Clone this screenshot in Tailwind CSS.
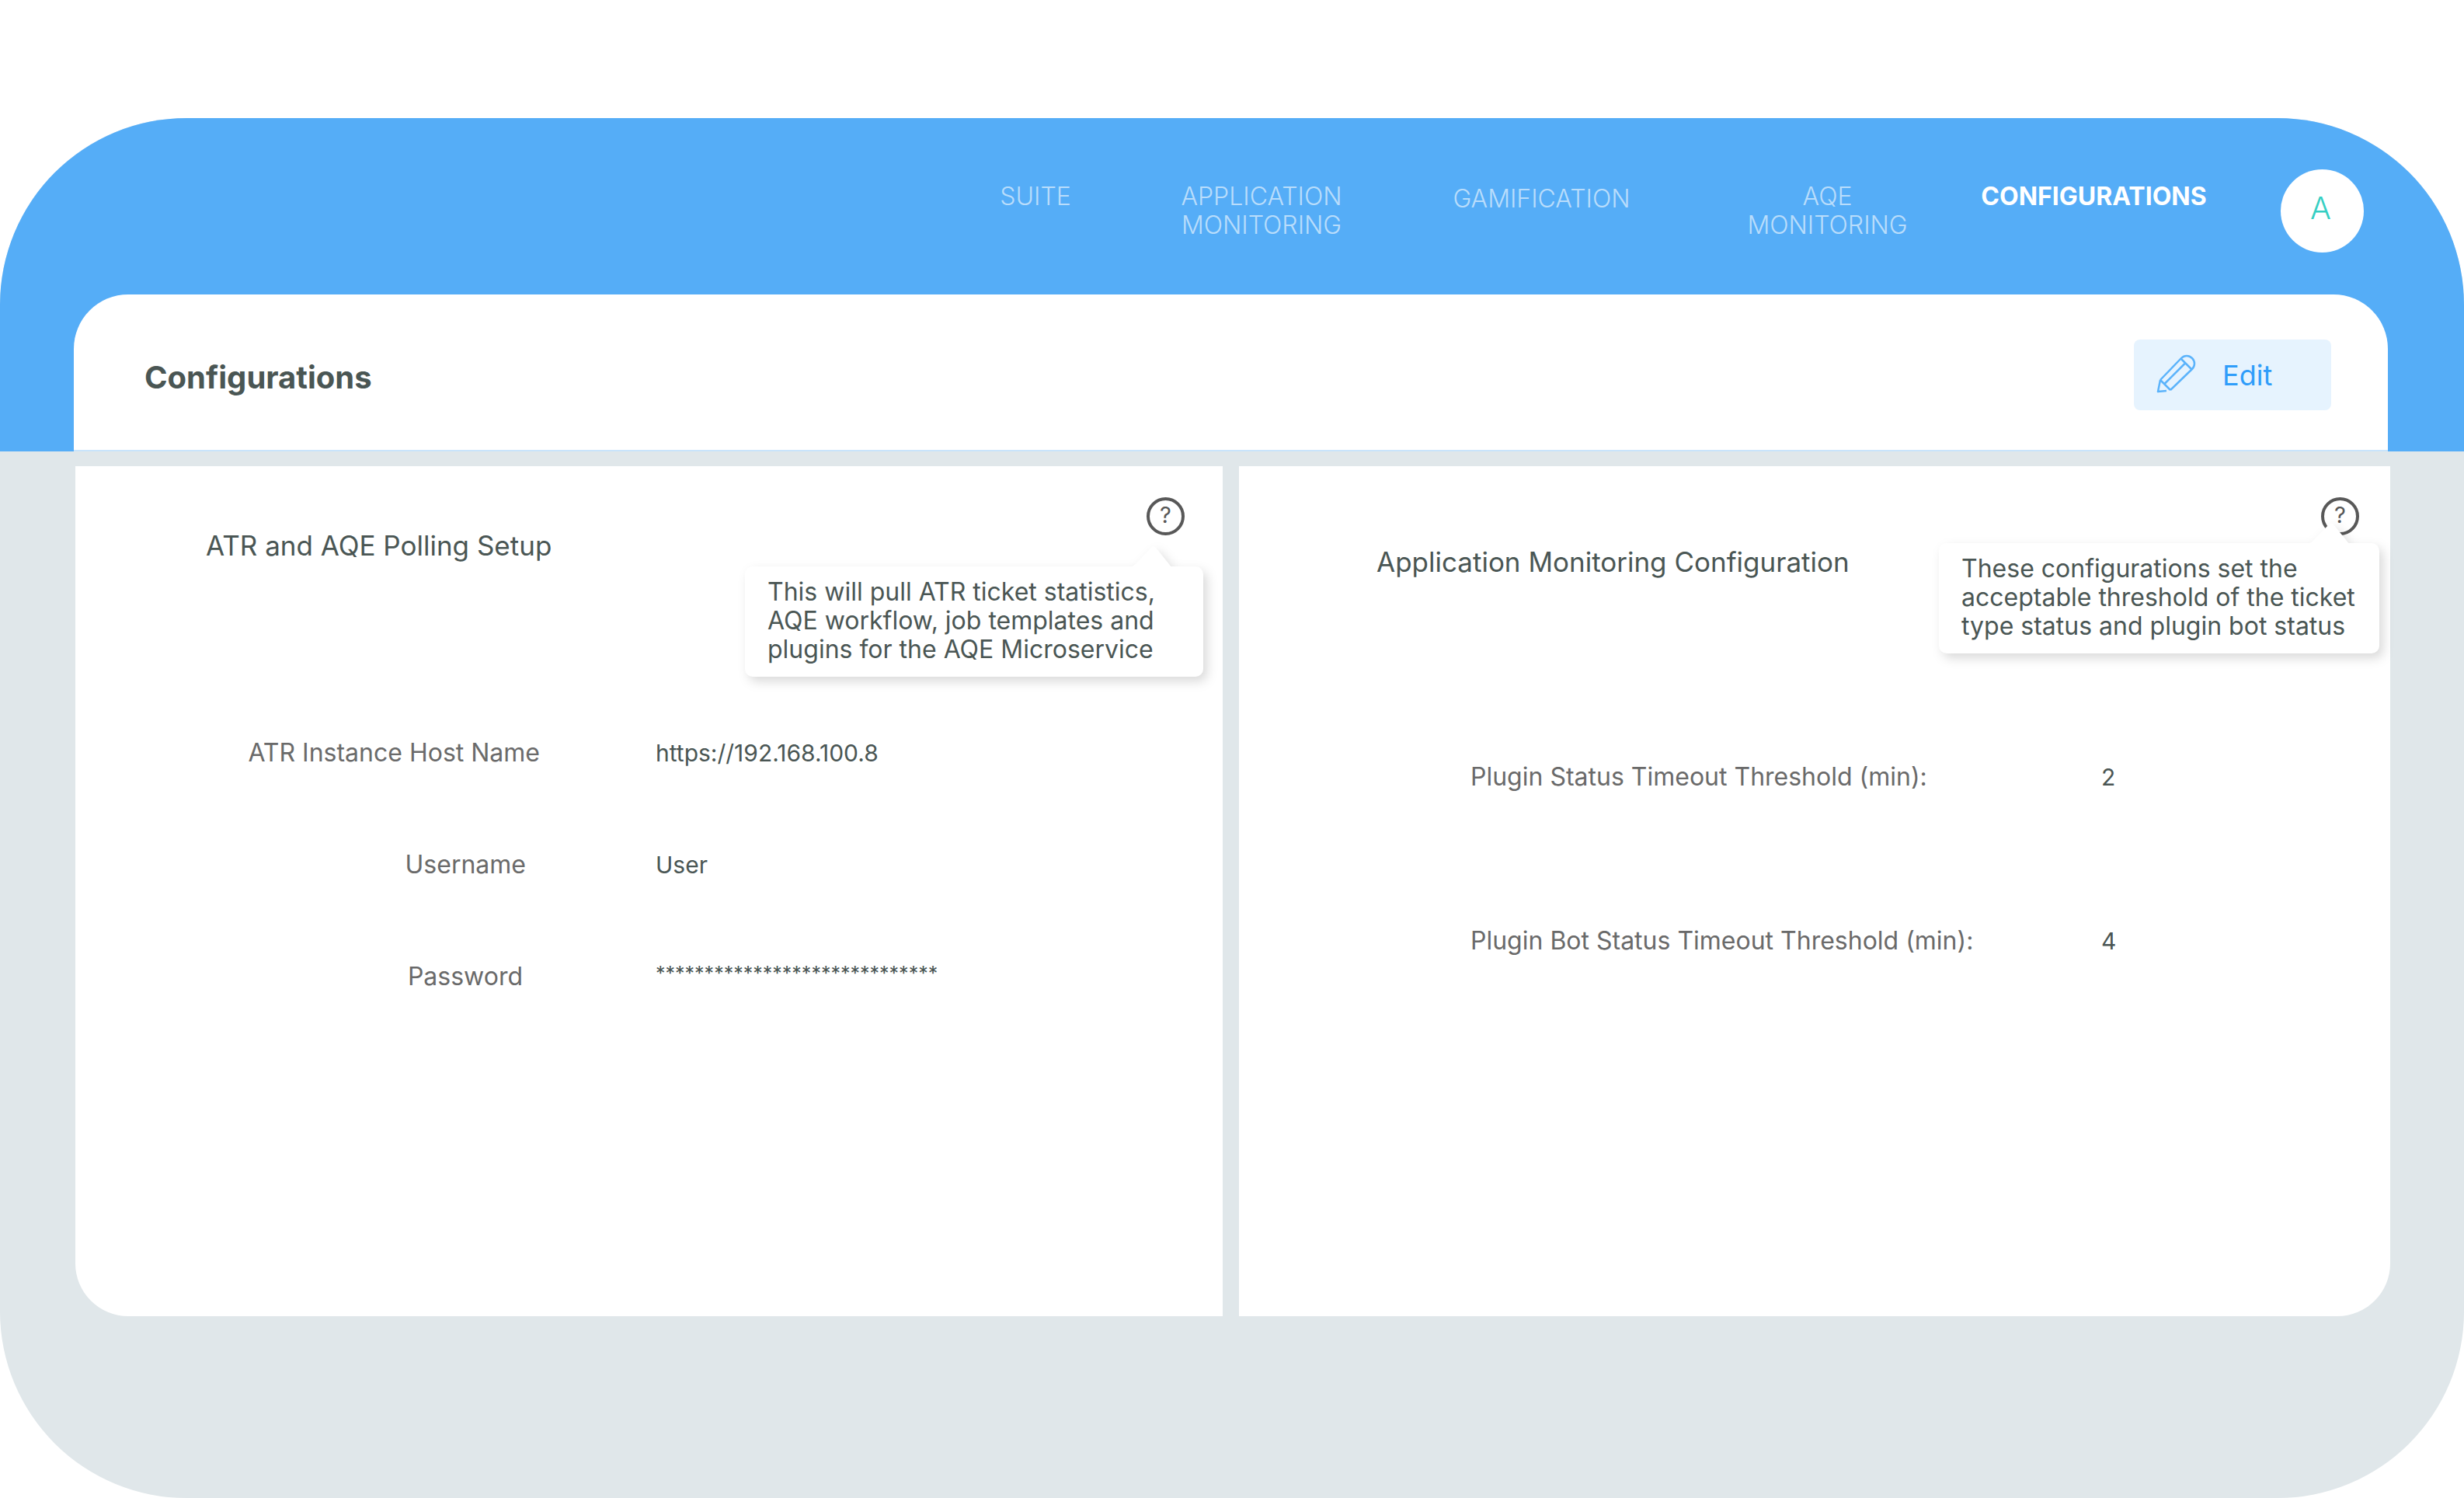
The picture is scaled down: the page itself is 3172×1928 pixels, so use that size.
<!DOCTYPE html>
<html lang="en">
<head>
<meta charset="utf-8">
<meta name="viewport" content="width=device-width, initial-scale=1">
<title>Configurations</title>
<script src="https://cdn.jsdelivr.net/npm/@tailwindcss/browser@4"></script>
</head>
<body class="bg-white font-[Inter,sans-serif] text-[#4a5654]">
<div class="flex min-h-screen flex-col pt-[152px]">
  <div class="flex flex-1 flex-col overflow-hidden rounded-[240px] bg-[#e0e7ea]">

    <header class="bg-[#55adf7] pr-[98px] pl-[95px]">
      <div class="flex h-[227px] items-start justify-end pr-[31px] pt-[66px]">
        <nav class="flex pt-[16px] text-center text-[32px] leading-[37px] font-light text-white/60" aria-label="Main">
          <a href="#suite" class="mr-[140px] w-[92px]">SUITE</a>
          <a href="#application" class="mr-[140px] w-[210px]">APPLICATION MONITORING</a>
          <a href="#gamification" class="mr-[148px] w-[231px] pt-[3px]">GAMIFICATION</a>
          <a href="#aqe" class="mr-[93px] w-[209px]">AQE MONITORING</a>
          <a href="#configurations" aria-current="page" class="mr-[95px] w-[291px] font-bold text-white">CONFIGURATIONS</a>
        </nav>
        <button type="button" aria-label="Account" class="flex size-[107px] items-center justify-center rounded-full bg-white pr-[4px] pb-[8px] text-[40px] font-light text-[#36cfc3]">A</button>
      </div>
      <div class="flex h-[202px] items-start justify-between rounded-t-[70px] border-b-2 border-[#c9e4fb] bg-white pr-[73px] pl-[91px] pt-[58px]">
        <h1 class="pt-[25px] text-[40px] leading-[48px] font-bold">Configurations</h1>
        <button type="button" class="flex h-[91px] w-[254px] items-center rounded-lg bg-[#e6f3fe] pl-[29px] text-[36px] text-[#2f9dfa]">
          <svg class="mr-[34px] size-[51px] overflow-visible" viewBox="0 0 51 51" fill="none" stroke="#5bb3fb" stroke-width="2.500" stroke-linejoin="round" aria-hidden="true">
            <path d="M5 32 32 4C36 0 42 0 46 4S50 14 46 18L18 45"/>
            <path d="M5 32 2 47 13 46M5 32 18 45M32 5 45 18M10 37.500 37 10.500"/>
          </svg>
          Edit
        </button>
      </div>
    </header>

    <main class="grid flex-1 grid-cols-[1477fr_1482fr] gap-[21px] pt-[19px] pr-[95px] pb-[234px] pl-[97px]">
      <section class="relative rounded-bl-[68px] bg-white pt-[82px]">
        <h2 class="pl-[168px] text-[35px] leading-[40px]">ATR and AQE Polling Setup</h2>
        <dl class="mt-[227px] grid grid-cols-[598px_1fr] gap-x-[149px] gap-y-[104px] text-[32px] leading-[40px]">
          <dt class="text-right text-[#6a6a6a]">ATR Instance Host Name</dt><dd class="text-[30px]">https://192.168.100.8</dd>
          <dt class="pr-[18px] text-right text-[#6a6a6a]">Username</dt><dd class="text-[30px]">User</dd>
          <dt class="pr-[22px] text-right text-[#6a6a6a]">Password</dt><dd class="text-[25px] leading-[32px]">*****************************</dd>
        </dl>
        <button type="button" aria-label="Help" aria-describedby="polling-tip" class="absolute top-[40px] right-[49px] flex size-[49px] items-center justify-center rounded-full border-4 border-[#585858] pb-[4px] text-[29px] leading-none text-[#585858]">?</button>
        <div id="polling-tip" role="tooltip" class="absolute top-[129px] right-[25px] w-[590px] rounded-[10px] bg-white pt-[14px] pb-[17px] pl-[29px] text-[32px] leading-[37px] drop-shadow-[5px_6px_7px_rgba(0,0,0,0.15)]">
          <svg class="absolute -top-[27px] right-[38px] h-[28px] w-[56px]" viewBox="0 0 56 28" fill="#fff" aria-hidden="true"><path d="M0 28Q4 27 8 23L27 3Q30 0 33 3L50 24Q52 28 56 28Z"/></svg>
          This will pull ATR ticket statistics,<br>AQE workflow, job templates and<br>plugins for the AQE Microservice
        </div>
      </section>

      <section class="relative rounded-br-[68px] bg-white pt-[103px]">
        <h2 class="pl-[177px] text-[35px] leading-[40px]">Application Monitoring Configuration</h2>
        <dl class="mt-[237px] grid grid-cols-[700px_1fr] gap-x-[112px] gap-y-[171px] pl-[298px] text-[32px] leading-[40px]">
          <dt class="text-[#6a6a6a]">Plugin Status Timeout Threshold (min):</dt><dd class="text-[30px]">2</dd>
          <dt class="text-[#6a6a6a]">Plugin Bot Status Timeout Threshold (min):</dt><dd class="text-[30px]">4</dd>
        </dl>
        <button type="button" aria-label="Help" aria-describedby="threshold-tip" class="absolute top-[40px] right-[40px] flex size-[49px] items-center justify-center rounded-full border-4 border-[#585858] pb-[4px] text-[29px] leading-none text-[#585858]">?</button>
        <div id="threshold-tip" role="tooltip" class="absolute top-[99px] right-[14px] w-[567px] rounded-[10px] bg-white pt-[14px] pb-[17px] pl-[29px] text-[32px] leading-[37px] drop-shadow-[5px_6px_7px_rgba(0,0,0,0.15)]">
          <svg class="absolute -top-[27px] right-[36px] h-[28px] w-[56px]" viewBox="0 0 56 28" fill="#fff" aria-hidden="true"><path d="M0 28Q4 27 8 23L27 3Q30 0 33 3L50 24Q52 28 56 28Z"/></svg>
          These configurations set the<br>acceptable threshold of the ticket<br>type status and plugin bot status
        </div>
      </section>
    </main>
  </div>
</div>
</body>
</html>
